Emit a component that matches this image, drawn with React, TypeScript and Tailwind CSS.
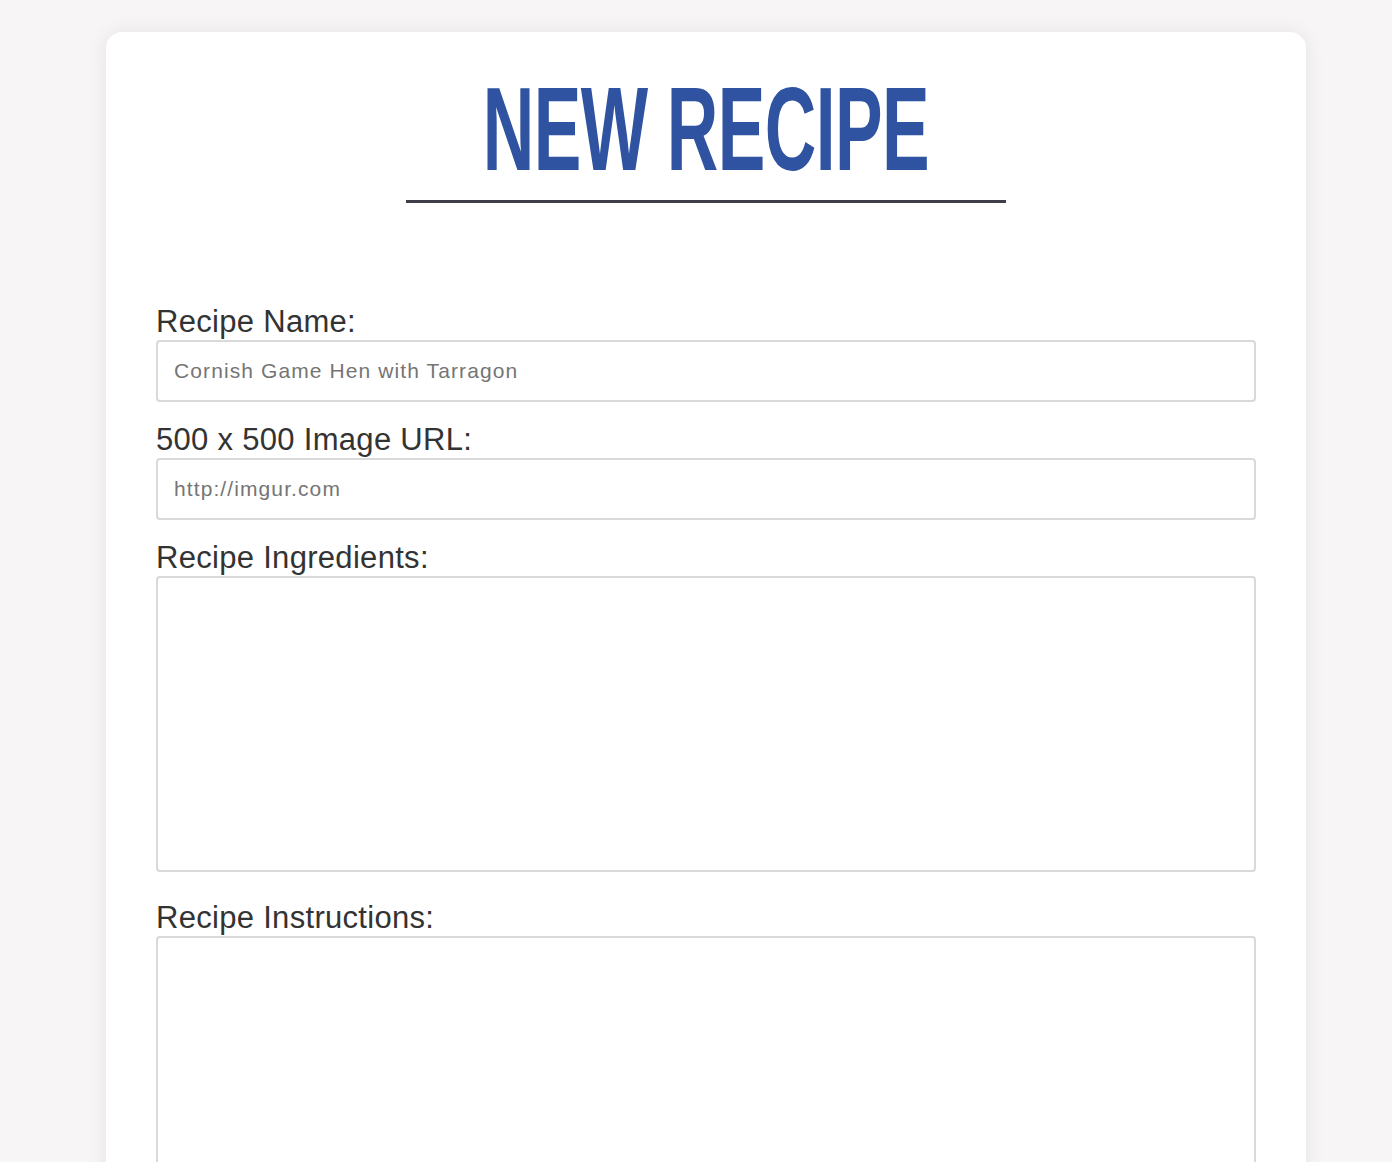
export default function App() {
  return (
    <div className="min-h-[1162px] bg-[#f7f5f6] pt-8" style={{ fontFamily: '"Liberation Sans", Arial, sans-serif' }}>
      <div className="ml-[106px] w-[1200px] bg-white rounded-2xl shadow-[0_0_20px_rgba(0,0,0,0.08)] pt-[52px] pb-10 px-[50px] min-h-[1200px]">
        <div className="flex flex-col items-center">
          <h1 className="text-[#2f53a0] font-bold text-[119px] leading-[90px] h-[96px] scale-x-[0.6] tracking-[-1px] whitespace-nowrap">
            NEW RECIPE
          </h1>
          <div className="w-[600px] h-[3px] bg-[#3f3e4a] mt-[20px]" />
        </div>

        <form className="mt-[101px] flex flex-col">
          <label className="text-[#333] text-[31px] leading-[36px] tracking-[0.3px]">Recipe Name:</label>
          <input
            className="h-[62px] border-2 border-[#d9d9d9] rounded-[4px] px-4 text-[21px] tracking-[1.1px] placeholder:text-[#757575] outline-none"
            placeholder="Cornish Game Hen with Tarragon"
          />
          <label className="text-[#333] text-[31px] leading-[36px] tracking-[0.3px] mt-[20px]">500 x 500 Image URL:</label>
          <input
            className="h-[62px] border-2 border-[#d9d9d9] rounded-[4px] px-4 text-[21px] tracking-[1.1px] placeholder:text-[#757575] outline-none"
            placeholder="http://imgur.com"
          />
          <label className="text-[#333] text-[31px] leading-[36px] tracking-[0.3px] mt-[20px]">Recipe Ingredients:</label>
          <textarea className="h-[296px] border-2 border-[#d9d9d9] rounded-[4px] resize-none outline-none" />
          <label className="text-[#333] text-[31px] leading-[36px] tracking-[0.3px] mt-[28px]">Recipe Instructions:</label>
          <textarea className="h-[296px] border-2 border-[#d9d9d9] rounded-[4px] resize-none outline-none" />
        </form>
      </div>
    </div>
  );
}
